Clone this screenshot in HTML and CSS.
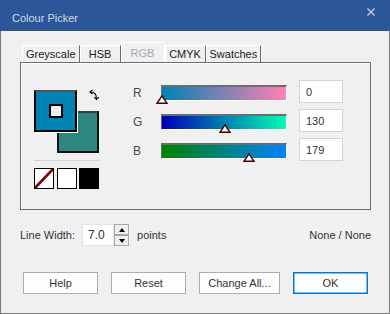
FILE: index.html
```html
<!DOCTYPE html>
<html lang="en">
<head>
    <meta charset="UTF-8">
    <title>Colour Picker</title>
    <link rel="stylesheet" href="styles.css">
</head>
<body>
    <div class="window">
        <div class="titlebar">
            <span class="title">Colour Picker</span>
            <svg class="close" width="8" height="8" viewBox="0 0 8 8">
                <path d="M0.5 0.5 L7.5 7.5 M7.5 0.5 L0.5 7.5" stroke="#c9d1de" stroke-width="1.3" fill="none"/>
            </svg>
        </div>

        <div class="dialog">
            <!-- Tabs -->
            <div class="tabs">
                <div class="tab">Greyscale</div>
                <div class="tab">HSB</div>
                <div class="tab active">RGB</div>
                <div class="tab">CMYK</div>
                <div class="tab">Swatches</div>
            </div>

            <div class="panel">
                <!-- Current colours -->
                <div class="colours">
                    <div class="stack">
                        <div class="back"></div>
                        <div class="front"><div class="hole"></div></div>
                        <svg class="swap" width="12" height="12" viewBox="0 0 12 12">
                            <path d="M2.5 3 Q8.5 3 8.5 9.5" stroke="#000" stroke-width="1.2" fill="none"/>
                            <path d="M4.5 1 L2 3 L4.5 5" stroke="#000" stroke-width="1.2" fill="none"/>
                            <path d="M6.2 8.2 L8.5 10.5 L10.8 8.2" stroke="#000" stroke-width="1.2" fill="none"/>
                        </svg>
                    </div>
                    <div class="sep"></div>
                    <div class="presets">
                        <div class="preset">
                            <svg width="18" height="19" viewBox="0 0 18 19">
                                <path d="M0 19 L18 0" stroke="#7a0000" stroke-width="2.6"/>
                            </svg>
                        </div>
                        <div class="preset"></div>
                        <div class="preset black"></div>
                    </div>
                </div>

                <!-- RGB sliders -->
                <div class="sliders">
                    <div class="row">
                        <span class="label">R</span>
                        <div class="track red">
                            <svg class="thumb" style="left: 0%" width="12" height="9" viewBox="0 0 12 9">
                                <path d="M6 0.8 L11 8.3 L1 8.3 Z" fill="#fff" stroke="#4a0000" stroke-width="1.4"/>
                            </svg>
                        </div>
                        <div class="value">0</div>
                    </div>
                    <div class="row">
                        <span class="label">G</span>
                        <div class="track green">
                            <svg class="thumb" style="left: 51%" width="12" height="9" viewBox="0 0 12 9">
                                <path d="M6 0.8 L11 8.3 L1 8.3 Z" fill="#fff" stroke="#4a0000" stroke-width="1.4"/>
                            </svg>
                        </div>
                        <div class="value">130</div>
                    </div>
                    <div class="row">
                        <span class="label">B</span>
                        <div class="track blue">
                            <svg class="thumb" style="left: 70.2%" width="12" height="9" viewBox="0 0 12 9">
                                <path d="M6 0.8 L11 8.3 L1 8.3 Z" fill="#fff" stroke="#4a0000" stroke-width="1.4"/>
                            </svg>
                        </div>
                        <div class="value">179</div>
                    </div>
                </div>
            </div>

            <!-- Line width -->
            <div class="linewidth">
                <span class="lw-label">Line Width:</span>
                <div class="spin-input">7.0</div>
                <div class="spinner">
                    <div class="spin-btn"><span class="arrow up"></span></div>
                    <div class="spin-btn"><span class="arrow down"></span></div>
                </div>
                <span class="units">points</span>
                <span class="status">None / None</span>
            </div>

            <!-- Buttons -->
            <div class="buttons">
                <button class="btn">Help</button>
                <button class="btn">Reset</button>
                <button class="btn wide">Change All...</button>
                <button class="btn default">OK</button>
            </div>
        </div>
    </div>
</body>
</html>
```

FILE: styles.css
```css
body {
    margin: 0;
    padding: 0;
    font-family: "Liberation Sans", Arial, sans-serif;
    font-size: 11px;
    color: #333;
    background-color: #f0f0f0;
}
.window {
    width: 390px;
    height: 314px;
}
.titlebar {
    height: 31px;
    background-color: #2b579a;
    display: flex;
    justify-content: space-between;
    align-items: flex-start;
    padding: 0 15px 0 12px;
    box-sizing: border-box;
}
.title {
    color: #d3d9e4;
    font-size: 11px;
    margin-top: 12px;
}
.close {
    margin-top: 8px;
}
.dialog {
    height: 283px;
    box-sizing: border-box;
    border: 1px solid #7a7a7a;
    border-top: none;
    padding: 11px 18px 0 19px;
}

/* Tabs */
.tabs {
    display: flex;
    align-items: flex-end;
    height: 20px;
    margin-left: 2px;
}
.tab {
    height: 17px;
    min-width: 41px;
    box-sizing: border-box;
    padding: 2px 3px 0 3px;
    text-align: center;
    color: #222;
    border-top: 1px solid #fff;
    border-left: 1px solid #fff;
    border-right: 1px solid #6d6d6d;
}
.tab.active {
    height: 20px;
    min-width: 44px;
    padding-top: 4px;
    color: #9fa9bc;
    border-right-color: #fff;
}

/* Panel */
.panel {
    height: 148px;
    box-sizing: border-box;
    border: 1px solid #6d6d6d;
    box-shadow: inset 1px 1px 0 #fff;
    display: flex;
    align-items: flex-start;
    padding: 17px 0 0 13px;
}
.colours {
    width: 65px;
    margin-top: 10px;
}
.stack {
    position: relative;
    height: 63px;
}
.back {
    position: absolute;
    left: 23px;
    top: 21px;
    width: 42px;
    height: 42px;
    box-sizing: border-box;
    background-color: #2e8681;
    border: 2px solid #111;
    border-top-color: #3a3a3a;
}
.front {
    position: absolute;
    left: 0;
    top: 0;
    width: 43px;
    height: 42px;
    box-sizing: border-box;
    background-color: #0082b3;
    border: 2px solid #000;
    border-top-color: #555;
    box-shadow: 1px 1px 0 #fff;
    display: flex;
    align-items: center;
    justify-content: center;
}
.hole {
    width: 14px;
    height: 14px;
    box-sizing: border-box;
    border: 2px solid #000;
    background-color: #f0f0f0;
}
.swap {
    position: absolute;
    left: 54px;
    top: -1px;
}
.sep {
    height: 1px;
    margin-top: 7px;
    background-color: #d4d4d4;
}
.presets {
    display: flex;
    justify-content: space-between;
    margin-top: 7px;
}
.preset {
    width: 20px;
    height: 21px;
    box-sizing: border-box;
    border: 1px solid #000;
    background-color: #fff;
}
.preset svg {
    display: block;
}
.preset.black {
    background-color: #000;
}

/* Sliders */
.sliders {
    margin-left: 34px;
}
.row {
    display: flex;
    align-items: flex-start;
    height: 29px;
}
.label {
    width: 28px;
    margin-top: 6px;
    font-size: 12px;
    color: #4a4a4a;
}
.track {
    position: relative;
    width: 126px;
    height: 16px;
    margin-top: 5px;
    box-sizing: border-box;
    border-top: 2px solid #6d6d6d;
    border-left: 1px solid #6d6d6d;
    border-right: 1px solid #fff;
    border-bottom: 1px solid #fff;
}
.track.red {
    background: linear-gradient(to right, rgb(0, 130, 179), rgb(255, 130, 179));
}
.track.green {
    background: linear-gradient(to right, rgb(0, 0, 179), rgb(0, 255, 179));
}
.track.blue {
    background: linear-gradient(to right, rgb(0, 130, 0), rgb(0, 130, 255));
}
.thumb {
    position: absolute;
    top: 8px;
    margin-left: -6px;
}
.value {
    width: 44px;
    height: 23px;
    margin-left: 12px;
    box-sizing: border-box;
    border: 1px solid #d3d3d3;
    background-color: #fff;
    padding: 5px 0 0 6px;
    color: #333;
}

/* Line width row */
.linewidth {
    display: flex;
    align-items: center;
    margin-top: 14px;
    height: 22px;
}
.lw-label {
    margin-right: 7px;
}
.spin-input {
    width: 32px;
    height: 22px;
    box-sizing: border-box;
    background-color: #fff;
    border: 1px solid #e3e3e3;
    padding: 3px 0 0 5px;
    font-size: 12px;
}
.spinner {
    display: flex;
    flex-direction: column;
    width: 15px;
    height: 22px;
}
.spin-btn {
    flex: 1;
    box-sizing: border-box;
    border: 1px solid #a9a9a9;
    background-color: #f0f0f0;
    display: flex;
    align-items: center;
    justify-content: center;
}
.arrow {
    width: 0;
    height: 0;
    border-left: 3px solid transparent;
    border-right: 3px solid transparent;
}
.arrow.up {
    border-bottom: 4px solid #000;
}
.arrow.down {
    border-top: 4px solid #000;
}
.units {
    margin-left: 8px;
}
.status {
    margin-left: auto;
}

/* Buttons */
.buttons {
    display: flex;
    gap: 13px;
    margin-top: 26px;
    margin-left: 3px;
}
.btn {
    width: 75px;
    height: 22px;
    padding: 0;
    font-family: "Liberation Sans", Arial, sans-serif;
    font-size: 11px;
    color: #333;
    background-color: #fdfdfd;
    border: 1px solid #adadad;
}
.btn.wide {
    width: 81px;
}
.btn.default {
    border-color: #0078d7;
    box-shadow: inset 0 0 0 0.5px #0078d7;
}
```
